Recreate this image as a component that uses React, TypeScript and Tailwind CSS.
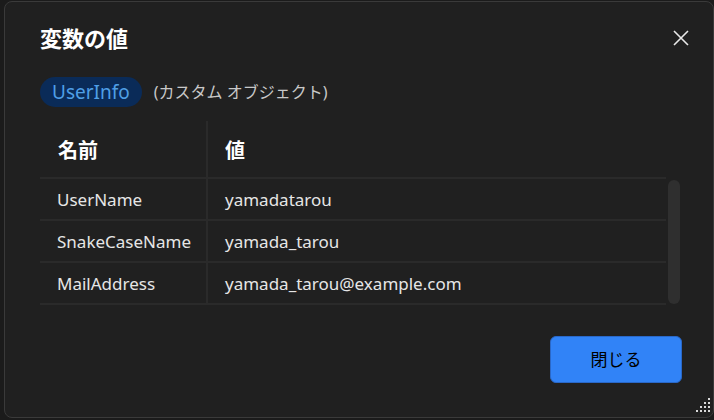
const rows = [
  { name: "UserName", value: "yamadatarou" },
  { name: "SnakeCaseName", value: "yamada_tarou" },
  { name: "MailAddress", value: "yamada_tarou@example.com" },
]

function ResizeGrip() {
  const dots: [number, number][] = []
  for (let r = 0; r < 4; r++) {
    for (let c = 3 - r; c < 4; c++) dots.push([c * 4, r * 4])
  }
  return (
    <svg width="16" height="16" viewBox="0 0 16 16" className="absolute right-[1px] bottom-[3px]">
      {dots.map(([x, y], i) => (
        <rect key={i} x={x} y={y} width="2" height="2" fill="#d8d8d8" />
      ))}
    </svg>
  )
}

export default function App() {
  return (
    <div
      className="h-[420px] w-[714px] bg-[#1b1b1b] pl-[4px] pt-[1px] overflow-hidden"
      style={{ fontFamily: '"Noto Sans", "Noto Sans CJK JP", sans-serif' }}
    >
      <div className="relative h-[417px] w-[710px] rounded-lg border border-[#3a3a3a] bg-[#202020] pt-[21px]">
        {/* Title */}
        <div className="flex h-[30px] items-center justify-between pl-[35px] pr-[24px]">
          <h1 className="text-[22px] font-bold text-white leading-none">変数の値</h1>
          <svg width="16" height="16" viewBox="0 0 16 16" className="text-[#e8e8e8]">
            <path d="M1 1 L15 15 M15 1 L1 15" stroke="currentColor" strokeWidth="1.6" />
          </svg>
        </div>

        {/* Type */}
        <div className="mt-[24px] flex items-center pl-[35px]">
          <span className="flex h-[30px] items-center rounded-full bg-[#0a2b58] px-[12px] text-[19px] text-[#4f9fe6]">
            UserInfo
          </span>
          <span className="ml-[12px] text-[16px] text-[#c8c8c8]">(カスタム オブジェクト)</span>
        </div>

        {/* Table */}
        <div className="mt-[14px] flex pl-[35px]">
          <div className="w-[626px]">
            <div className="flex h-[58px] border-b-2 border-[#2a2a2a] text-[20px] font-bold text-white">
              <div className="flex w-[168px] items-center border-r-2 border-[#2a2a2a] pl-[18px] pt-[4px]">名前</div>
              <div className="flex items-center pl-[17px] pt-[4px]">値</div>
            </div>
            {rows.map((r) => (
              <div key={r.name} className="flex h-[42px] border-b-2 border-[#2a2a2a] text-[17px] text-[#e6e6e6]">
                <div className="flex w-[168px] items-center border-r-2 border-[#2a2a2a] pl-[17px] pt-[2px]">{r.name}</div>
                <div className="flex items-center pl-[17px] pt-[2px]">{r.value}</div>
              </div>
            ))}
          </div>
          <div className="ml-[2px] mt-[59px] h-[124px] w-[12px] rounded-full bg-[#2f2f2f]" />
        </div>

        {/* Footer */}
        <div className="mt-[31px] flex justify-end pr-[31px]">
          <button className="flex h-[47px] w-[132px] items-center justify-center rounded-md border border-[#2a68c8] bg-[#3183f7] text-[17px] text-black">
            閉じる
          </button>
        </div>

        <ResizeGrip />
      </div>
    </div>
  )
}
